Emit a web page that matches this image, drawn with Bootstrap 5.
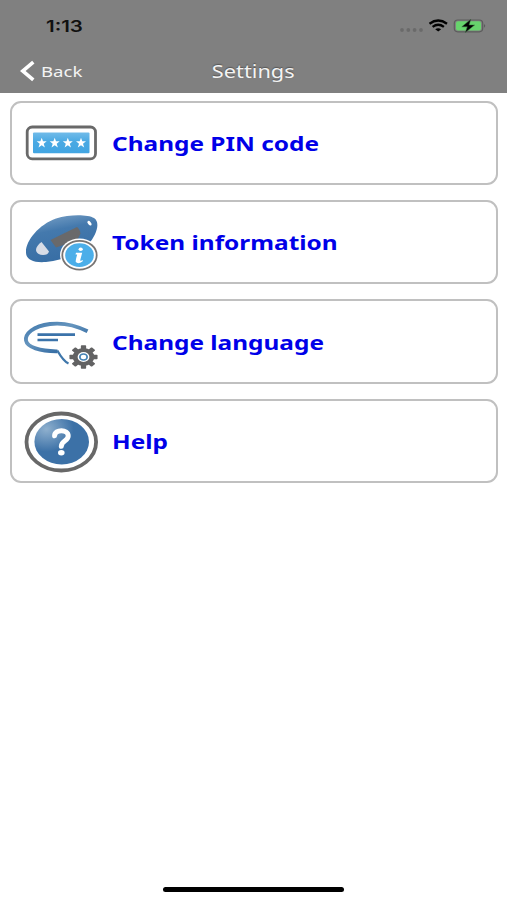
<!DOCTYPE html>
<html lang="en">
<head>
<meta charset="utf-8">
<meta name="viewport" content="width=device-width, initial-scale=1">
<title>Settings</title>
<link href="https://cdn.jsdelivr.net/npm/bootstrap@5.3.0/dist/css/bootstrap.min.css" rel="stylesheet">
<style>
body{font-family:"Noto Sans",sans-serif;background:#fff;height:900px;overflow:hidden}
.topbar{background:#808080;height:93.4px}
.status{height:50px;padding:2px 20px 0 46px}
.clock{font:600 16px/24px Inter,sans-serif;color:#111;transform:scaleX(1.28);transform-origin:left}
.titles{height:41px;padding-left:20px}
.back{font-size:15px;line-height:20px;color:#f4f4f4;margin-left:6px;transform:scaleX(1.24);transform-origin:left}
.heading{font-size:18px;line-height:24px;color:#f4f4f4;text-shadow:0 -1px 1px #555;transform:scaleX(1.21)}
.menu{padding:7.2px 9px 0 10px;gap:14.9px}
.entry{height:84.5px;border:2px solid #c0c0c0;border-radius:11px;padding-left:7.5px;background:#fff}
.entry svg{flex:none;margin-top:1px}
.entry-label{font-weight:700;font-size:20px;line-height:28px;color:#0000e8;margin:2.4px 0 0 8.5px;transform:scaleX(1.22);transform-origin:left;white-space:nowrap}
.homebar{width:181px;height:5px;background:#000;border-radius:3px;margin-bottom:8px}
</style>
<script src="https://cdn.jsdelivr.net/npm/bootstrap@5.3.0/dist/js/bootstrap.bundle.min.js"></script>
</head>
<body class="d-flex flex-column">
<header class="topbar flex-shrink-0">
  <div class="status d-flex align-items-center justify-content-between">
    <span class="clock">1:13</span>
    <svg width="88" height="20" viewBox="399 16 88 20">
      <g fill="#6a6a6a"><circle cx="402" cy="30" r="1.900"/><circle cx="408.300" cy="30" r="1.900"/><circle cx="414.600" cy="30" r="1.900"/><circle cx="421" cy="30" r="1.900"/></g>
      <g fill="none" stroke="#000" stroke-width="2.300"><path d="M429.500 23.700Q438.200 17.400 447 23.700"/><path d="M432.600 26.900Q438.200 22.700 443.900 26.900"/></g>
      <path d="M435.200 29.200Q438.200 27.400 441.200 29.200L438.200 31.600Z"/>
      <rect x="454.300" y="20" width="28.400" height="11.800" rx="3.500" fill="none" stroke="#5c5c5c" stroke-width="1.200"/>
      <rect x="456" y="21.300" width="25" height="9.200" rx="2" fill="#67d46c"/>
      <path d="M484 24Q486.500 25.800 484 27.800Z" fill="#5c5c5c"/>
      <path d="M470.800 19.300L461.800 26.800H467.300L465.300 32.600L474.600 25H469.100Z" stroke="#3f6d42" stroke-width=".5"/>
    </svg>
  </div>
  <div class="titles d-flex align-items-center position-relative">
    <svg width="15" height="22" viewBox="0 0 15 22"><path d="M13.300 2.200L2.700 11L13.300 19.800" fill="none" stroke="#fff" stroke-width="3.600"/></svg>
    <span class="back">Back</span>
    <div class="position-absolute start-0 end-0 d-flex justify-content-center"><span class="heading">Settings</span></div>
  </div>
</header>
<main class="menu d-flex flex-column">
  <div class="entry d-flex align-items-center">
    <svg width="84" height="66" viewBox="20 110 84 66">
      <defs>
        <linearGradient id="pin" x1="0" y1="0" x2="0" y2="1"><stop offset="0" stop-color="#71bbe9"/><stop offset=".45" stop-color="#49a9e3"/><stop offset="1" stop-color="#42a5e2"/></linearGradient>
        <path id="star" d="M0-5.200L1.300-1.700H5L2 .7L3.200 4.600L0 2.200L-3.200 4.600L-2 .7L-5-1.700H-1.300Z"/>
      </defs>
      <rect x="27.200" y="127" width="68.300" height="31.800" rx="5" fill="#fff" stroke="#696969" stroke-width="2.800"/>
      <rect x="33" y="132.500" width="56.500" height="20.700" rx="1" fill="url(#pin)"/>
      <g fill="#fff"><use href="#star" x="41.700" y="143"/><use href="#star" x="54.700" y="143"/><use href="#star" x="67.800" y="143"/><use href="#star" x="81" y="143"/></g>
    </svg>
    <span class="entry-label">Change PIN code</span>
  </div>
  <div class="entry d-flex align-items-center">
    <svg width="84" height="66" viewBox="20 209.500 84 66">
      <defs><linearGradient id="tok" x1=".2" y1="0" x2=".5" y2="1"><stop offset="0" stop-color="#78a0c6"/><stop offset=".35" stop-color="#4479ad"/><stop offset="1" stop-color="#376da4"/></linearGradient></defs>
      <path d="M26 251C26 240 39 224 56 218C70 213.500 88 214 94 217.500C101 222 96 235 89 243C80 254 61 260 46 261.500C33 262.500 25.500 259 26 251Z" fill="url(#tok)"/>
      <path d="M50.500 239.500L77 226.500Q79.500 228 80.500 233L77 240L56 247Z" fill="#69696b"/>
      <path d="M41.500 241.500L49 251Q48 254.500 43 254.500C36 254.500 34.500 249 37.500 245.500Q39 243 41.500 241.500Z" fill="#d7dce6"/>
      <ellipse cx="89.500" cy="222.700" rx="2.700" ry="1.500" transform="rotate(48 89.500 222.700)" fill="#fff"/>
      <ellipse cx="79.500" cy="254.500" rx="19.500" ry="16.500" fill="#fff"/>
      <ellipse cx="79.500" cy="254.700" rx="17.200" ry="14.400" fill="#fff" stroke="#777473" stroke-width="1.800"/>
      <ellipse cx="79.500" cy="254.700" rx="14.300" ry="11.900" fill="#4baee9"/>
      <g fill="#fff"><ellipse cx="80.700" cy="248.800" rx="2.100" ry="1.700"/><path d="M76 252.200H82.200L80.200 259.800Q80.300 261 83 259.500L82.500 261Q78 264 75.800 261.500Q75.300 260.500 77.200 253.900H75.500Z"/></g>
    </svg>
    <span class="entry-label">Token information</span>
  </div>
  <div class="entry d-flex align-items-center">
    <svg width="84" height="66" viewBox="20 309 84 66">
      <defs><linearGradient id="talk" x1="0" y1="0" x2="1" y2="1"><stop offset="0" stop-color="#4179ad"/><stop offset=".4" stop-color="#6695be"/><stop offset=".75" stop-color="#386fa5"/></linearGradient></defs>
      <path d="M87.500 331.200C76 325.500 62 322.500 50 324C33 326 25 334 26 340.500C27 347 40 351.500 57.500 351.300" fill="none" stroke="url(#talk)" stroke-width="3.800"/>
      <path d="M57.300 350.500C61 357 64 361.500 68.500 363.500" fill="none" stroke="#3f77ab" stroke-width="2.300"/>
      <path d="M37.500 334.600H75M37.500 340H58" stroke="#3b73aa" stroke-width="2.700"/>
      <g transform="translate(83.500 357) scale(1.200 1)" fill="#626263">
        <circle r="9"/>
        <rect x="-2.200" y="-11.700" width="4.400" height="23.400" rx=".6"/><rect x="-2.200" y="-11.700" width="4.400" height="23.400" rx=".6" transform="rotate(45)"/><rect x="-2.200" y="-11.700" width="4.400" height="23.400" rx=".6" transform="rotate(90)"/><rect x="-2.200" y="-11.700" width="4.400" height="23.400" rx=".6" transform="rotate(135)"/>
        <circle r="4.900" fill="#fff"/><circle r="3" fill="#fff" stroke="#4482b5" stroke-width="1.500"/>
      </g>
    </svg>
    <span class="entry-label">Change language</span>
  </div>
  <div class="entry d-flex align-items-center">
    <svg width="84" height="66" viewBox="20 408.500 84 66">
      <defs><radialGradient id="ball" cx=".22" cy=".22" r=".5"><stop offset="0" stop-color="#8fb0ce"/><stop offset="1" stop-color="#3c71a7"/></radialGradient></defs>
      <ellipse cx="61.300" cy="441.500" rx="34.800" ry="28.500" fill="#fff" stroke="#686868" stroke-width="3.800"/>
      <ellipse cx="61.700" cy="441.300" rx="27.300" ry="22.700" fill="url(#ball)"/>
      <path d="M54.600 435.200C54.800 428.500 68.200 428.500 68.200 435.500C68.200 440.500 61.500 440 61.300 445.800" fill="none" stroke="#fff" stroke-width="5" stroke-linecap="round"/>
      <ellipse cx="61.300" cy="452.200" rx="3.300" ry="2.700" fill="#fff"/>
    </svg>
    <span class="entry-label">Help</span>
  </div>
</main>
<div class="homebar mt-auto mx-auto flex-shrink-0"></div>
</body>
</html>
